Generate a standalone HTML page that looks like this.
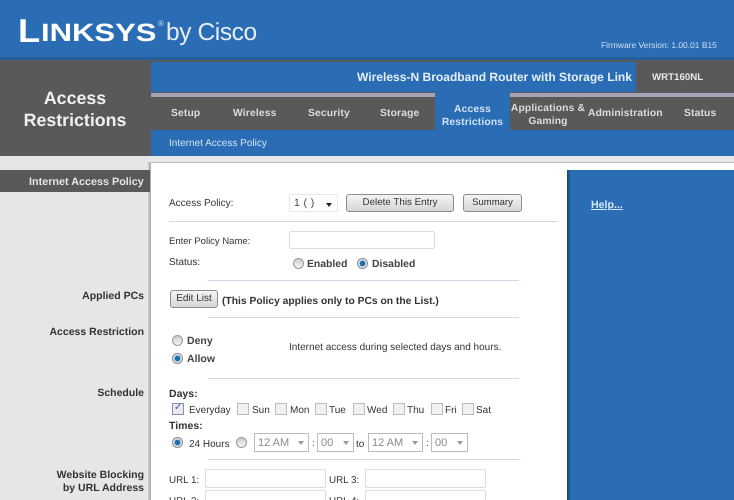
<!DOCTYPE html>
<html><head><meta charset="utf-8">
<style>
html,body{margin:0;padding:0;width:734px;height:500px;overflow:hidden;background:#fff}
body{position:relative;font-family:"Liberation Sans",Arial,sans-serif;font-size:10px;color:#333;text-rendering:geometricPrecision}
#w{position:absolute;left:0;top:0;width:734px;height:500px;overflow:hidden;filter:blur(.35px)}
.a{position:absolute;white-space:nowrap}
.r{position:absolute}
.b{font-weight:bold}
.nav{position:absolute;color:#ddd;font-weight:bold;font-size:10.3px;text-align:center;top:108px;letter-spacing:.15px;white-space:nowrap}
.lab{position:absolute;right:590px;text-align:right;font-weight:bold;font-size:10.5px;color:#333;white-space:nowrap}
.hr{position:absolute;height:1px;background:#d4d3e8}
.btn{position:absolute;box-sizing:border-box;border:1px solid #8e8e8e;border-radius:3px;background:linear-gradient(#f4f4f4,#d6d6d6);text-align:center;font-size:9.8px;color:#333}
.inp{position:absolute;box-sizing:border-box;border:1px solid #dcdcdc;border-radius:2px;background:#fff}
.rad{position:absolute;box-sizing:border-box;width:11px;height:11px;border-radius:50%;border:1px solid #999;background:linear-gradient(#ccc,#f6f6f6)}
.rad.on{border:1px solid #888;background:radial-gradient(circle,#1c6fa8 0 2.5px,#dfe6ee 3.3px)}
.cb{position:absolute;box-sizing:border-box;width:12px;height:12px;border:1px solid #bbb;background:#f1f1f1}
.sel{position:absolute;box-sizing:border-box;height:19px;border:1px solid #bbb;background:#fff;color:#8c8c8c;font-size:11px;line-height:18px;padding-left:3px}
.sel:after{content:"";position:absolute;right:4px;top:7px;border:3.5px solid transparent;border-top:4px solid #999;border-bottom:0}
</style></head><body><div id="w">
<div class="r" style="left:0;top:0;width:734px;height:57px;background:#2a6db5"></div>
<div class="r" style="left:0;top:57px;width:734px;height:3px;background:#245f9c"></div>
<div class="r" style="left:0;top:60px;width:734px;height:97px;background:#595959"></div>

<div class="a b" style="left:18px;top:13px;font-size:33px;line-height:36px;color:#fff;transform-origin:0 0;transform:scaleX(1.1)">L</div>
<div class="a b" style="left:41px;top:19px;font-size:25px;line-height:28px;color:#fff;transform-origin:0 0;transform:scaleX(1.24)">INKSYS</div>
<div class="a" style="left:158px;top:19px;font-size:8px;color:#d6e4f3">®</div>
<div class="a" style="left:166px;top:18px;font-size:24.5px;line-height:30px;color:#e6eef8;letter-spacing:-.4px">by Cisco</div>
<div class="a" style="left:601px;top:40px;font-size:8.45px;color:#cfdff0">Firmware Version: 1.00.01 B15</div>

<div class="a b" style="left:0;top:88px;width:150px;text-align:center;font-size:17.8px;line-height:21.5px;color:#f0f0f0;white-space:normal">Access<br>Restrictions</div>

<div class="r" style="left:151px;top:62px;width:485px;height:30px;background:#2a6db5"></div>
<div class="a b" style="left:357px;top:70px;font-size:12.05px;color:#e4eef8">Wireless-N Broadband Router with Storage Link</div>
<div class="a b" style="left:652px;top:72px;font-size:9.7px;color:#e8e8e8">WRT160NL</div>
<div class="r" style="left:151px;top:93px;width:583px;height:4px;background:#a5a3b5"></div>
<div class="r" style="left:435px;top:92px;width:75px;height:38px;background:#2a6db5"></div>
<div class="r" style="left:151px;top:130px;width:583px;height:26px;background:#2a6db5"></div>

<div class="nav" style="left:171px">Setup</div>
<div class="nav" style="left:233px">Wireless</div>
<div class="nav" style="left:308px">Security</div>
<div class="nav" style="left:380px">Storage</div>
<div class="nav" style="left:435px;width:75px;top:104px;line-height:12.5px;color:#cfe3f6">Access<br>Restrictions</div>
<div class="nav" style="left:510px;width:76px;top:103px;line-height:12.8px">Applications &amp;<br>Gaming</div>
<div class="nav" style="left:588px">Administration</div>
<div class="nav" style="left:684px">Status</div>
<div class="a" style="left:169px;top:138px;font-size:10px;line-height:12px;color:#d5e5f5">Internet Access Policy</div>

<div class="r" style="left:0;top:156px;width:734px;height:6px;background:#e8e8e8"></div>
<div class="r" style="left:0;top:162px;width:734px;height:1px;background:#bcbcbc"></div>
<div class="r" style="left:0;top:157px;width:148px;height:343px;background:#e6e6e6"></div>
<div class="r" style="left:148px;top:163px;width:3px;height:337px;background:linear-gradient(90deg,#d0d0d0,#a6a6a6)"></div>
<div class="r" style="left:0;top:170px;width:150px;height:22px;background:#595959"></div>
<div class="a b" style="left:29px;top:176px;font-size:10.8px;color:#e6e6e6">Internet Access Policy</div>
<div class="r" style="left:567px;top:170px;width:167px;height:330px;background:#2a6db5"></div>
<div class="r" style="left:567px;top:170px;width:4px;height:330px;background:linear-gradient(90deg,#17406f,#2a6db5)"></div>
<div class="a b" style="left:591px;top:199px;font-size:10.6px;color:#d7e9f8;text-decoration:underline">Help...</div>

<div class="lab" style="top:290px">Applied PCs</div>
<div class="lab" style="top:326px">Access Restriction</div>
<div class="lab" style="top:387px">Schedule</div>
<div class="lab" style="top:469px;line-height:13px">Website Blocking<br>by URL Address</div>

<div class="a" style="left:169px;top:198px;line-height:12px">Access Policy:</div>
<div class="r" style="left:289px;top:194px;width:49px;height:18px;box-sizing:border-box;border:1px solid #e6e6e6;background:#fff;font-size:10.5px;line-height:17px;padding-left:4px;color:#444;letter-spacing:.4px">1 ( )</div>
<div class="r" style="left:326px;top:203px;border:3.5px solid transparent;border-top:4px solid #222;border-bottom:0"></div>
<div class="btn" style="left:346px;top:194px;width:108px;height:18px;line-height:16px;font-size:9.8px">Delete This Entry</div>
<div class="btn" style="left:463px;top:194px;width:59px;height:18px;line-height:16px;font-size:9.5px">Summary</div>
<div class="hr" style="left:169px;top:221px;width:389px"></div>

<div class="a" style="left:169px;top:236px;font-size:9.5px;line-height:12px">Enter Policy Name:</div>
<div class="inp" style="left:289px;top:231px;width:146px;height:18px"></div>
<div class="a" style="left:169px;top:257px;line-height:12px">Status:</div>
<div class="rad" style="left:293px;top:258px"></div>
<div class="a" style="left:307px;top:259px;font-size:10.4px;font-weight:bold;color:#444">Enabled</div>
<div class="rad on" style="left:357px;top:258px"></div>
<div class="a" style="left:372px;top:259px;font-size:10.4px;font-weight:bold;color:#444">Disabled</div>
<div class="hr" style="left:208px;top:280px;width:311px"></div>

<div class="btn" style="left:170px;top:290px;width:48px;height:18px;line-height:15px;font-size:10px">Edit List</div>
<div class="a b" style="left:222px;top:296px;color:#333;font-size:10.3px">(This Policy applies only to PCs on the List.)</div>
<div class="hr" style="left:208px;top:317px;width:311px"></div>

<div class="rad" style="left:172px;top:335px"></div>
<div class="a b" style="left:187px;top:335px;font-size:10.5px;color:#444">Deny</div>
<div class="rad on" style="left:172px;top:353px"></div>
<div class="a b" style="left:187px;top:353px;font-size:10.5px;color:#444">Allow</div>
<div class="a" style="left:289px;top:342px;font-size:10px;line-height:12px">Internet access during selected days and hours.</div>
<div class="hr" style="left:208px;top:378px;width:311px"></div>

<div class="a b" style="left:169px;top:388px;font-size:10.5px">Days:</div>
<div class="cb" style="left:172px;top:403px;border-color:#8a8fb0;background:#e8eaf4"></div>
<div class="a" style="left:174px;top:402px;font-size:10px;color:#4a5a9a">✓</div>
<div class="a" style="left:189px;top:405px;line-height:12px">Everyday</div>
<div class="cb" style="left:237px;top:403px"></div><div class="a" style="left:252px;top:405px;line-height:12px">Sun</div>
<div class="cb" style="left:275px;top:403px"></div><div class="a" style="left:290px;top:405px;line-height:12px">Mon</div>
<div class="cb" style="left:315px;top:403px"></div><div class="a" style="left:329px;top:405px;line-height:12px">Tue</div>
<div class="cb" style="left:353px;top:403px"></div><div class="a" style="left:367px;top:405px;line-height:12px">Wed</div>
<div class="cb" style="left:393px;top:403px"></div><div class="a" style="left:407px;top:405px;line-height:12px">Thu</div>
<div class="cb" style="left:431px;top:403px"></div><div class="a" style="left:445px;top:405px;line-height:12px">Fri</div>
<div class="cb" style="left:462px;top:403px"></div><div class="a" style="left:476px;top:405px;line-height:12px">Sat</div>
<div class="a b" style="left:169px;top:420px;font-size:10.5px">Times:</div>
<div class="rad on" style="left:172px;top:437px"></div>
<div class="a" style="left:189px;top:439px;line-height:12px">24 Hours</div>
<div class="rad" style="left:236px;top:437px"></div>
<div class="sel" style="left:254px;top:433px;width:55px">12 AM</div>
<div class="a" style="left:312px;top:438px;line-height:12px">:</div>
<div class="sel" style="left:317px;top:433px;width:37px">00</div>
<div class="a" style="left:356px;top:439px;line-height:12px">to</div>
<div class="sel" style="left:368px;top:433px;width:55px">12 AM</div>
<div class="a" style="left:426px;top:438px;line-height:12px">:</div>
<div class="sel" style="left:431px;top:433px;width:37px">00</div>
<div class="hr" style="left:208px;top:459px;width:311px"></div>

<div class="a" style="left:169px;top:475px;font-size:9.8px;line-height:12px">URL 1:</div>
<div class="inp" style="left:205px;top:469px;width:121px;height:19px"></div>
<div class="a" style="left:329px;top:475px;font-size:9.8px;line-height:12px">URL 3:</div>
<div class="inp" style="left:365px;top:469px;width:121px;height:19px"></div>
<div class="a" style="left:169px;top:496px;font-size:9.8px;line-height:12px">URL 2:</div>
<div class="inp" style="left:205px;top:490px;width:121px;height:19px"></div>
<div class="a" style="left:329px;top:496px;font-size:9.8px;line-height:12px">URL 4:</div>
<div class="inp" style="left:365px;top:490px;width:121px;height:19px"></div>
</div></body></html>
